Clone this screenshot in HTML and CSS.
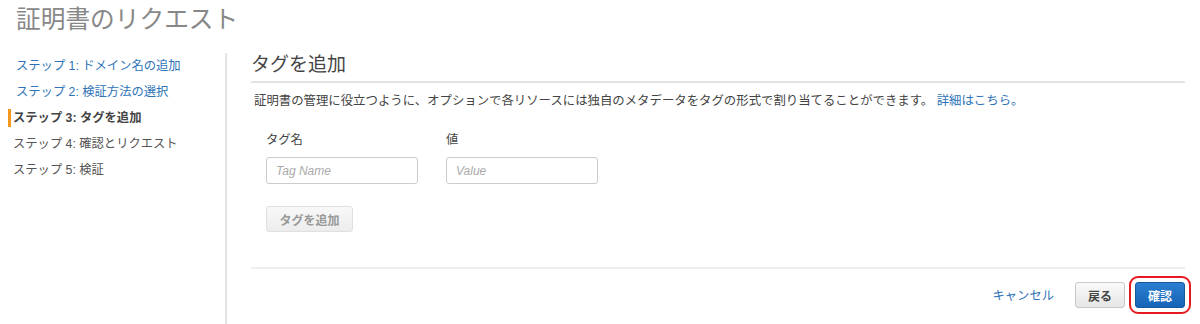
FILE: index.html
```html
<!DOCTYPE html>
<html lang="ja">
<head>
  <meta charset="UTF-8">
  <meta name="viewport" content="width=device-width, initial-scale=1.0">
  <title>証明書のリクエスト</title>
  <link rel="stylesheet" href="styles.css">
</head>
<body>
  <div class="page">
    <h1 class="page-title">証明書のリクエスト</h1>

    <div class="wizard">
      <ul class="steps">
        <li class="step done"><a href="#">ステップ 1: ドメイン名の追加</a></li>
        <li class="step done"><a href="#">ステップ 2: 検証方法の選択</a></li>
        <li class="step active">ステップ 3: タグを追加</li>
        <li class="step">ステップ 4: 確認とリクエスト</li>
        <li class="step">ステップ 5: 検証</li>
      </ul>

      <div class="content">
        <h2 class="section-title">タグを追加</h2>
        <p class="description">
          証明書の管理に役立つように、オプションで各リソースには独自のメタデータをタグの形式で割り当てることができます。 <a href="#">詳細はこちら。</a>
        </p>

        <div class="tags">
          <div class="tag-row">
            <div class="field">
              <label for="tagName">タグ名</label>
              <input type="text" id="tagName" placeholder="Tag Name">
            </div>
            <div class="field">
              <label for="tagValue">値</label>
              <input type="text" id="tagValue" placeholder="Value">
            </div>
          </div>
          <button type="button" class="btn btn-add" disabled>タグを追加</button>
        </div>

        <div class="actions">
          <a href="#" class="cancel">キャンセル</a>
          <button type="button" class="btn">戻る</button>
          <button type="button" class="btn btn-primary">確認</button>
        </div>
      </div>
    </div>
  </div>
</body>
</html>
```

FILE: styles.css
```css
html, body {
  height: 100%;
}
body {
  margin: 0;
  font-family: "Liberation Sans", "Noto Sans CJK JP", sans-serif;
  font-size: 12.3px;
  color: #444;
  background: #fff;
}
a {
  color: #2e73b8;
  text-decoration: none;
}
.page {
  display: flex;
  flex-direction: column;
  height: 100%;
}
.page-title {
  margin: 0;
  padding: 4px 0 0 16px;
  height: 52px;
  box-sizing: border-box;
  font-size: 24.7px;
  font-weight: normal;
  line-height: 32px;
  color: #888;
}
.wizard {
  flex: 1;
  display: flex;
  padding-top: 1px;
}
.steps {
  width: 227px;
  margin: 0;
  padding: 0 0 0 8px;
  box-sizing: border-box;
  list-style: none;
  border-right: 2px solid #e4e4e4;
  flex-shrink: 0;
}
.step {
  height: 26px;
  line-height: 26px;
  padding-left: 5px;
  color: #555;
}
.step.done a {
  padding-left: 3px;
}
.step.active {
  font-weight: bold;
  color: #444;
  border-left: 3px solid #f7981d;
  padding-left: 2px;
  line-height: 18px;
  height: 18px;
  margin: 4px 0;
}
.content {
  flex: 1;
  padding: 0 15px 0 24px;
}
.section-title {
  margin: 0;
  padding-bottom: 4px;
  font-size: 19px;
  font-weight: normal;
  line-height: 24px;
  color: #444;
  border-bottom: 2px solid #e4e4e4;
}
.description {
  margin: 10px 0 0 3px;
  line-height: 16px;
  font-size: 12.4px;
}
.tags {
  padding: 23px 0 35px 15px;
  border-bottom: 2px solid #eee;
}
.tag-row {
  display: flex;
  gap: 28px;
}
.field label {
  display: block;
  line-height: 16px;
  margin-bottom: 9px;
}
.field input {
  width: 152px;
  height: 27px;
  box-sizing: border-box;
  padding: 0 9px;
  border: 1px solid #ccc;
  border-radius: 3px;
  font-family: "Liberation Sans", sans-serif;
  font-size: 12px;
}
.field input::placeholder {
  color: #aaa;
  font-style: italic;
}
.btn {
  height: 26px;
  padding: 0 10px;
  border: 1px solid #c8c8c8;
  border-radius: 3px;
  background: linear-gradient(#fafafa, #e6e6e6);
  font-family: "Liberation Sans", "Noto Sans CJK JP", sans-serif;
  font-size: 12px;
  font-weight: bold;
  color: #444;
  cursor: pointer;
}
.btn-add {
  margin-top: 22px;
  width: 87px;
  border-color: #e0e0e0;
  background: linear-gradient(#f8f8f8, #ececec);
  color: #999;
  cursor: default;
}
.actions {
  display: flex;
  justify-content: flex-end;
  align-items: center;
  gap: 10px;
  padding-top: 13px;
}
.cancel {
  margin-right: 11px;
}
.actions .btn {
  width: 50px;
  padding: 0;
}
.btn-primary {
  border-color: #17599e;
  background: linear-gradient(#2b7ed1, #1664b5);
  color: #fff;
  outline: 2px solid #e8191e;
  outline-offset: 4px;
}
```
